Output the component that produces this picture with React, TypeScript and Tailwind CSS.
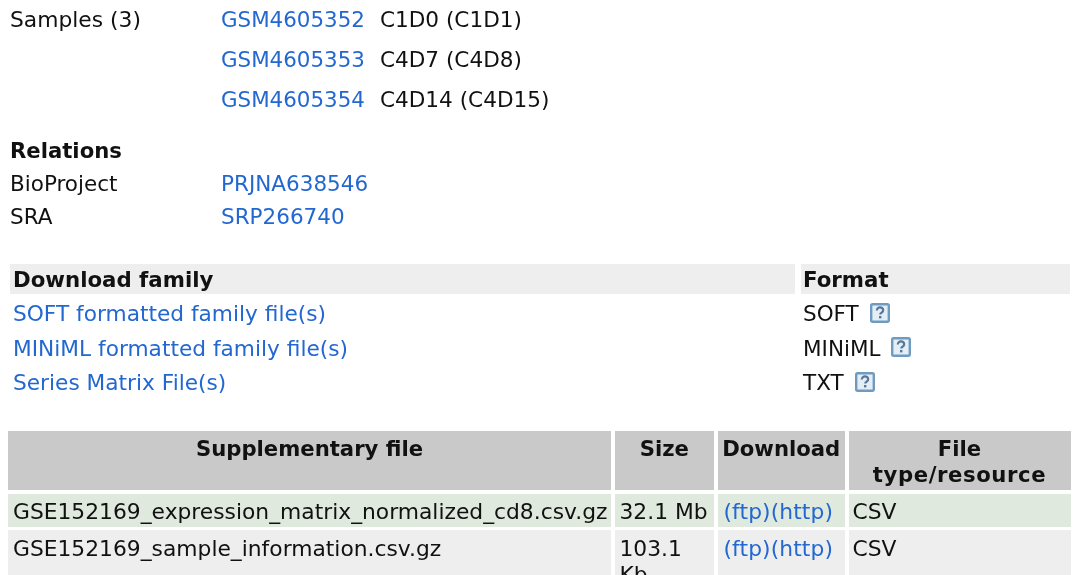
import { Fragment } from "react";

const samples = [
  { id: "GSM4605352", label: "C1D0 (C1D1)" },
  { id: "GSM4605353", label: "C4D7 (C4D8)" },
  { id: "GSM4605354", label: "C4D14 (C4D15)" },
];

const families = [
  { name: "SOFT formatted family file(s)", format: "SOFT" },
  { name: "MINiML formatted family file(s)", format: "MINiML" },
  { name: "Series Matrix File(s)", format: "TXT" },
];

const files = [
  { name: "GSE152169_expression_matrix_normalized_cd8.csv.gz", size: "32.1 Mb", rowClass: "bg-[#dfe9dd] h-[33px] pt-[5px]" },
  { name: "GSE152169_sample_information.csv.gz", size: "103.1 Kb", rowClass: "bg-[#eeeeee] h-[60px] pt-[6px]" },
];

function HelpIcon() {
  return (
    <svg width="20" height="20" viewBox="0 0 20 20" className="ml-[11px] -mt-[3px] shrink-0">
      <rect x="1.2" y="1.2" width="17.6" height="17.6" rx="1.5" fill="#e6eef5" stroke="#6f9bc0" strokeWidth="2.4" />
      <path d="M6.8 7.6c0-2.1 1.4-3.2 3.2-3.2s3.2 1 3.2 2.8c0 1.5-1 2.1-2 2.8-.6.4-.9.8-.9 1.6" fill="none" stroke="#56789a" strokeWidth="2.2" />
      <rect x="9" y="13" width="2.4" height="2.4" fill="#56789a" />
    </svg>
  );
}

function Link({ children }: { children: React.ReactNode }) {
  return <a className="text-[#2368d1]">{children}</a>;
}

export default function App() {
  return (
    <div className="h-[575px] w-[1080px] overflow-hidden bg-white font-['DejaVu_Sans',sans-serif] text-[21.5px] leading-[26px] text-[#111111] blur-[0.4px]">
      {/* Samples */}
      <div className="flex pl-[10px] pt-[7px]">
        <div className="w-[211px] text-[21.8px]">Samples (3)</div>
        <div className="flex flex-col gap-[14px]">
          {samples.map((s) => (
            <div key={s.id} className="flex gap-[15px]">
              <span className="text-[21.4px]">
                <Link>{s.id}</Link>
              </span>
              <span className="text-[21.6px]">{s.label}</span>
            </div>
          ))}
        </div>
      </div>

      {/* Relations */}
      <div className="pl-[10px] pt-[25px]">
        <div className="text-[21.2px] font-bold">Relations</div>
        <div className="mt-[7px] flex">
          <div className="w-[211px]">BioProject</div>
          <Link>PRJNA638546</Link>
        </div>
        <div className="mt-[7px] flex">
          <div className="w-[211px]">SRA</div>
          <Link>SRP266740</Link>
        </div>
      </div>

      {/* Download family */}
      <div className="mt-[34px] ml-[10px] grid w-[1060px] grid-cols-[785px_269px] gap-x-[6px]">
        <div className="flex h-[30px] items-center bg-[#eeeeee] pl-[3px] pt-[1px] text-[21.3px] font-bold">Download family</div>
        <div className="flex h-[30px] items-center bg-[#eeeeee] pl-[2px] pt-[1px] text-[21.3px] font-bold">Format</div>
        {families.map((f, i) => (
          <Fragment key={f.format}>
            <div className={`flex h-[34.5px] items-center pl-[3px] text-[21.7px] ${i === 0 ? "mt-[3px]" : ""}`}>
              <Link>{f.name}</Link>
            </div>
            <div className={`flex h-[34.5px] items-center pl-[2px] ${i === 0 ? "mt-[3px]" : ""}`}>
              {f.format}
              <HelpIcon />
            </div>
          </Fragment>
        ))}
      </div>

      {/* Supplementary files */}
      <div className="mt-[30px] ml-[8px] grid w-[1063px] grid-cols-[603px_99.5px_127.5px_222px] gap-[3.5px] text-[21.8px]">
        <div className="h-[59.5px] bg-[#c9c9c9] pt-[5px] text-center text-[21.2px] font-bold">Supplementary file</div>
        <div className="h-[59.5px] bg-[#c9c9c9] pt-[5px] text-center text-[21.2px] font-bold">Size</div>
        <div className="h-[59.5px] bg-[#c9c9c9] pt-[5px] text-center text-[21.2px] font-bold">Download</div>
        <div className="h-[59.5px] bg-[#c9c9c9] pt-[5px] text-center text-[21.2px] font-bold">
          File
          <br />
          <span className="tracking-[0.6px]">type/resource</span>
        </div>
        {files.map((f) => (
          <Fragment key={f.name}>
            <div className={`${f.rowClass} pl-[5px]`}>{f.name}</div>
            <div className={`${f.rowClass} pl-[5px] pr-[4px]`}>{f.size}</div>
            <div className={`${f.rowClass} whitespace-nowrap pl-[6px] tracking-[0.1px]`}>
              <Link>(ftp)</Link>
              <Link>(http)</Link>
            </div>
            <div className={`${f.rowClass} pl-[4px]`}>CSV</div>
          </Fragment>
        ))}
      </div>
    </div>
  );
}
